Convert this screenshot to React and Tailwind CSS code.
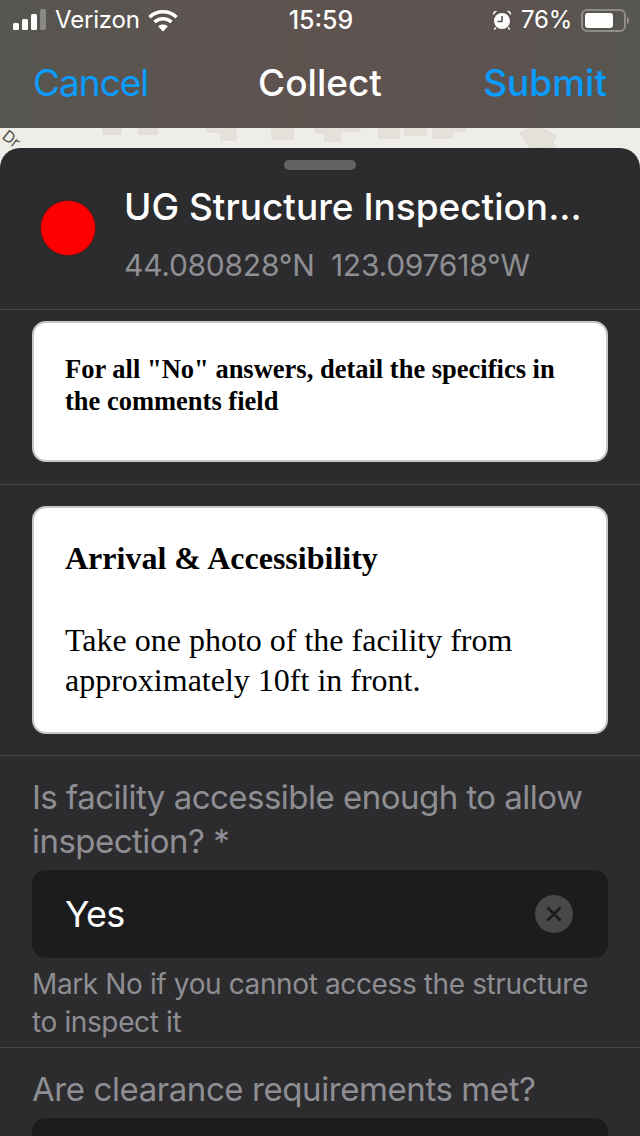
import React from 'react';

const sans = "font-['Inter','Liberation_Sans',sans-serif]";

const Signal = () => (
    <svg width="34" height="22" viewBox="0 0 34 22" fill="none">
        <rect x="0" y="14" width="6" height="7" rx="1.5" fill="#fff" />
        <rect x="9" y="10" width="6" height="11" rx="1.5" fill="#fff" />
        <rect x="18" y="5" width="6" height="16" rx="1.5" fill="#fff" />
        <rect x="27" y="0" width="6" height="21" rx="1.5" fill="#8a8984" />
    </svg>
);

const Wifi = () => (
    <svg width="30" height="23" viewBox="0 0 30 23" fill="none" stroke="#fff" strokeWidth="3.6">
        <path d="M1.5 8.2C9 1 21 1 28.5 8.2" />
        <path d="M6.5 13C11.2 8.6 18.8 8.6 23.5 13" />
        <path d="M15 22.5 10.2 17.4C13 15 17 15 19.8 17.4Z" fill="#fff" stroke="none" />
    </svg>
);

const Alarm = () => (
    <svg width="20" height="20" viewBox="0 0 20 20" fill="none">
        <circle cx="10" cy="11" r="8" fill="#fff" />
        <path d="M1 5 5 1C2.8 .3 .3 2.4 1 5ZM19 5 15 1C17.2 .3 19.7 2.4 19 5Z" fill="#fff" />
        <path d="M3.8 17.5 2.2 19.5M16.2 17.5 17.8 19.5" stroke="#fff" strokeWidth="1.5" />
        <path d="M10 6V11.5H5.5" stroke="#57514e" strokeWidth="1.6" />
    </svg>
);

const Battery = () => (
    <div className="flex items-center">
        <div className="w-[45px] h-[23px] rounded-[6px] border-2 border-[#8f8c88] p-[2px]">
            <div className="w-[28px] h-full rounded-[3px] bg-white"></div>
        </div>
        <div className="w-[2px] h-[7px] ml-[1px] rounded-r bg-[#8f8c88]"></div>
    </div>
);

const MapStrip = () => (
    <div className="h-[40px] -mb-[20px] bg-[#eeede7]">
        <svg width="640" height="40" viewBox="0 0 640 40" fill="#e3e1da" stroke="#dbd9d2">
            <rect x="103" y="-2" width="18" height="8" />
            <rect x="139" y="-2" width="18" height="8" />
            <path d="M207 -1H236V12H221V4H207Z" />
            <rect x="272" y="-2" width="21" height="13" />
            <path d="M315 -1H360V3H340V13H325V5H315Z" />
            <rect x="379" y="-2" width="20" height="12" />
            <rect x="405" y="-2" width="21" height="9" />
            <path d="M433 -1H465V3H452V10H433Z" />
            <path d="M520 5 537 -2 556 8 552 14 556 19 530 20Z" />
            <text x="1" y="10" fontSize="16" fill="#55554f" stroke="none" transform="rotate(38 1 10)">Dr</text>
        </svg>
    </div>
);

const RichCard = ({ className, children }) => (
    <div className={`mx-[32px] rounded-[14px] bg-white border-2 border-[#c6c6c8] pl-[31px] pr-[28px] text-black font-['Liberation_Serif',serif] ${className}`}>
        {children}
    </div>
);

const ClearButton = () => (
    <div className="w-[38px] h-[38px] rounded-full bg-[#48484a] flex items-center justify-center">
        <svg width="18" height="18" viewBox="0 0 18 18" stroke="#1c1c1e" strokeWidth="2.8">
            <path d="M2.5 2.5 15.5 15.5M15.5 2.5 2.5 15.5" />
        </svg>
    </div>
);

const App = () => {
    return (
        <div className={`w-[640px] h-[1136px] overflow-hidden bg-[#2c2c2e] ${sans}`}>
            {/* Status bar + nav */}
            <div className="h-[128px] bg-[linear-gradient(90deg,#575650_0%,#5f5350_45%,#5e5250_70%,#575650_100%)] text-white">
                <div className="h-[40px] flex items-center justify-between pl-[13px] pr-[11px]">
                    <div className="w-[230px] flex items-center gap-[8px]">
                        <Signal />
                        <span className="text-[24px] leading-none tracking-[-0.2px]">Verizon</span>
                        <Wifi />
                    </div>
                    <span className="text-[25px] leading-none font-medium">15:59</span>
                    <div className="w-[230px] flex items-center justify-end gap-[9px]">
                        <Alarm />
                        <span className="text-[24px] leading-none tracking-[-0.2px]">76%</span>
                        <Battery />
                    </div>
                </div>
                <div className="h-[84px] flex items-center justify-between px-[33px] text-[37px] leading-none">
                    <span className="w-[160px] tracking-[-1px] text-[#0a9cff]">Cancel</span>
                    <span className="font-medium">Collect</span>
                    <span className="w-[160px] text-right font-medium text-[#0a9cff]">Submit</span>
                </div>
            </div>

            <MapStrip />

            {/* Sheet */}
            <div className="relative rounded-t-[20px] bg-[#2c2c2e]">
                <div className="h-[162px] border-b border-[#444446]">
                    <div className="pt-[12px] flex justify-center">
                        <div className="w-[72px] h-[10px] rounded-full bg-[#636366]"></div>
                    </div>
                    <div className="flex items-start pl-[40px] pr-[30px]">
                        <div className="w-[56px] h-[56px] mt-[30px] rounded-full bg-[#ff0000] border border-[#5a1a1a]"></div>
                        <div className="ml-[28px] min-w-0 flex-1">
                            <div className="mt-[13px] text-[37px] leading-[48px] font-medium text-white whitespace-nowrap">UG Structure Inspection...</div>
                            <div className="mt-[17px] text-[30px] leading-[34px] tracking-[-0.25px] text-[#8e8e93] whitespace-pre">44.080828°N  123.097618°W</div>
                        </div>
                    </div>
                </div>

                <div className="h-[175px] border-b border-[#444446] pt-[11px]">
                    <RichCard className="h-[141px] pt-[30px] text-[26.5px] leading-[32px] font-bold">
                        For all "No" answers, detail the specifics in the comments field
                    </RichCard>
                </div>

                <div className="pt-[21px] h-[271px] border-b border-[#444446]">
                    <RichCard className="h-[228px] pt-[30px]">
                        <div className="text-[32px] leading-[40px] font-bold">Arrival &amp; Accessibility</div>
                        <div className="mt-[42px] text-[32px] leading-[40px]">Take one photo of the facility from approximately 10ft in front.</div>
                    </RichCard>
                </div>

                <div className="px-[32px] h-[292px] border-b border-[#444446]">
                    <div className="pt-[19px] text-[33px] leading-[44px] tracking-[-0.52px] text-[#8e8e93]">Is facility accessible enough to allow inspection? *</div>
                    <div className="mt-[7px] h-[88px] rounded-[14px] bg-[#1c1c1e] pl-[33px] pr-[35px] flex items-center justify-between">
                        <span className="text-[36px] tracking-[-0.7px] text-white">Yes</span>
                        <ClearButton />
                    </div>
                    <div className="mt-[7px] text-[28px] leading-[38px] tracking-[-0.38px] text-[#8e8e93]">Mark No if you cannot access the structure to inspect it</div>
                </div>

                <div className="px-[32px]">
                    <div className="pt-[19px] text-[33px] leading-[44px] tracking-[-0.42px] text-[#8e8e93]">Are clearance requirements met?</div>
                    <div className="mt-[7px] h-[88px] rounded-[14px] bg-[#1c1c1e]"></div>
                </div>
            </div>
        </div>
    );
};

export default App;
